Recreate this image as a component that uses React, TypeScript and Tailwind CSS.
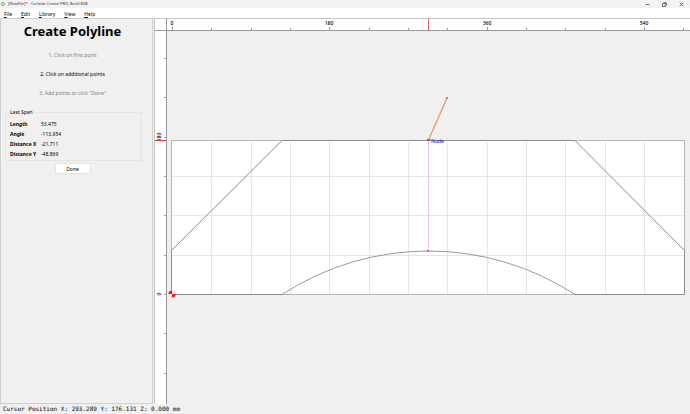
import type { ReactNode } from "react"

const menus = ["File", "Edit", "Library", "View", "Help"]

const steps = [
  { text: "1. Click on first point", active: false },
  { text: "2. Click on additional points", active: true },
  { text: '3. Add points or click "Done"', active: false },
]

const span = [
  { label: "Length", value: "53.475" },
  { label: "Angle", value: "-113.954" },
  { label: "Distance X", value: "-21.711" },
  { label: "Distance Y", value: "-48.869" },
]

// Canvas coordinates, measured from the corner below the rulers
const ORIGIN = { x: 5, y: 263 }
const STOCK = { width: 513, height: 154 }
const STEP = 39.33

const gridX = Array.from({ length: 12 }, (_, i) => Math.round(ORIGIN.x + (i + 1) * STEP))
const gridY = Array.from({ length: 3 }, (_, i) => Math.round(ORIGIN.y - (i + 1) * STEP))
const ticksX = Array.from({ length: 14 }, (_, i) => ({ pos: Math.round(ORIGIN.x + i * STEP), value: i * 45 }))
const ticksY = Array.from({ length: 9 }, (_, i) => ({ pos: Math.round(ORIGIN.y + (i - 6) * STEP), value: (6 - i) * 45 }))

function TitleBar() {
  return (
    <header className="flex h-2 shrink-0 items-center bg-[#f3f3f3] pl-px text-[4px] leading-[8px] text-[#333]">
      <svg viewBox="0 0 10 10" className="mr-[3px] h-1 w-1">
        <path d="M8.5 2.6A4 4 0 1 0 8.8 7V5.4H5.4" fill="none" stroke="#49a942" strokeWidth="2.4" />
      </svg>
      <h1>[NewFile]* - Carbide Create PRO, Build 838</h1>
      <div className="ml-auto flex gap-3 pr-[6px]">
        <WindowButton label="Minimize">
          <path d="M0.5 2.5h4" />
        </WindowButton>
        <WindowButton label="Restore">
          <path d="M0.5 1.7h2.8v2.8H0.5zM1.5 0.6h2.4q0.6 0 0.6 0.6v2.3" />
        </WindowButton>
        <WindowButton label="Close">
          <path d="M0.7 0.7l3.6 3.6M4.3 0.7l-3.6 3.6" />
        </WindowButton>
      </div>
    </header>
  )
}

function WindowButton({ label, children }: { label: string; children: ReactNode }) {
  return (
    <button type="button" aria-label={label} className="flex h-2 items-center">
      <svg viewBox="0 0 5 5" className="h-[5px] w-[5px]" fill="none" stroke="#333" strokeWidth="0.7">
        {children}
      </svg>
    </button>
  )
}

function MenuBar() {
  return (
    <nav className="flex h-[10px] shrink-0 gap-[9px] bg-white pl-1 text-[5px] leading-[12px]">
      {menus.map((menu) => (
        <button key={menu} type="button">
          <span className="underline">{menu[0]}</span>
          {menu.slice(1)}
        </button>
      ))}
    </nav>
  )
}

function SidePanel() {
  return (
    <aside className="flex w-[153px] shrink-0 flex-col border border-[#d0d0d0] bg-[#f0f0f0] px-1 text-[5px]">
      <h2 className="mt-[3px] pr-2 text-center text-[13px] leading-[18px] font-bold">Create Polyline</h2>
      <ol className="mt-[10px] flex flex-col gap-[9px] pr-2 text-center leading-[10px]">
        {steps.map((step) => (
          <li key={step.text} className={step.active ? "text-black" : "text-[#808080]"}>
            {step.text}
          </li>
        ))}
      </ol>
      <fieldset className="mt-[10px] mr-[6px] border border-[#e6e6e6] px-1 pt-[3px] pb-px">
        <legend className="leading-[8px]">Last Span</legend>
        <dl className="grid grid-cols-[31px_1fr] leading-[10px]">
          {span.map((row) => (
            <div key={row.label} className="contents">
              <dt className="font-bold whitespace-nowrap">{row.label}</dt>
              <dd>{row.value}</dd>
            </div>
          ))}
        </dl>
      </fieldset>
      <button type="button" className="mt-[2px] mr-2 h-[11px] w-9 self-center rounded-[1px] border border-[#e3e3e3] bg-white leading-[8px]">
        Done
      </button>
    </aside>
  )
}

function TopRuler() {
  return (
    <svg className="h-[13px] w-full border-t border-b border-t-[#c4c4c4] border-b-[#999] bg-white text-[5px]">
      {ticksX.map(({ pos, value }) => (
        <g key={value}>
          <path d={`M${pos}.5 ${value % 180 === 0 ? 8 : 9}v4`} stroke="#999" />
          {value % 180 === 0 && (
            <text x={pos} y="6" textAnchor="middle" className="font-medium">
              {value}
            </text>
          )}
        </g>
      ))}
      <path d="M261.5 0v12" stroke="#ff5050" />
    </svg>
  )
}

function LeftRuler() {
  return (
    <svg className="h-full w-[13px] border-r border-l border-r-[#999] border-l-[#c4c4c4] bg-white text-[5px]">
      {ticksY.map(({ pos, value }) => (
        <g key={value}>
          <path d={`M9 ${pos}.5h3`} stroke="#999" />
          {value % 180 === 0 && (
            <text transform={`translate(6 ${pos}) rotate(-90)`} textAnchor="middle" className="font-medium">
              {value}
            </text>
          )}
        </g>
      ))}
      <path d="M0 109.5h12" stroke="#ff3030" />
    </svg>
  )
}

function Canvas() {
  return (
    <svg className="h-full w-full bg-[#f0f0f0]">
      <rect x={ORIGIN.x} y={ORIGIN.y - STOCK.height} width={STOCK.width} height={STOCK.height} fill="#fff" />
      <g stroke="#e6e6e6">
        {gridX.map((x) => (
          <path key={x} d={`M${x}.5 111v152`} />
        ))}
        {gridY.map((y) => (
          <path key={y} d={`M5 ${y}.5h513`} />
        ))}
      </g>
      <rect x="4.5" y="109.5" width="513" height="154" fill="none" stroke="#b8b8b8" />
      <path
        d="M115 263.5H4.5V219.5L115 109.5H408L517.5 219.5V263.5H408"
        fill="none"
        stroke="#8c8c8c"
      />
      <path d="M115 263.5A268.5 268.5 0 0 1 408 263.5" fill="none" stroke="#8c8c8c" strokeWidth="0.9" />
      <path d="M261.5 110v110" stroke="#f9bdf9" />
      <rect x="260" y="219" width="2" height="2" fill="#c060c0" />
      <path d="M261.5 109L280 67" stroke="#e79a62" strokeWidth="1.3" />
      <rect x="260" y="108" width="3" height="2" fill="#a06070" />
      <rect x="279" y="66" width="2" height="2" fill="#c88058" />
      <text x="264" y="112" className="fill-[#2020e0] text-[5px] font-medium">
        Node
      </text>
      <g transform="translate(5 263)">
        <circle r="3.3" fill="#fff" stroke="#ff8080" strokeWidth="0.4" />
        <path d="M0 0V-3.5A3.5 3.5 0 0 0-3.5 0ZM0 0V3.5A3.5 3.5 0 0 0 3.5 0Z" fill="#ff1010" />
      </g>
    </svg>
  )
}

export default function App() {
  return (
    <div className="flex h-screen flex-col overflow-hidden bg-[#f0f0f0] font-['Noto_Sans',sans-serif] text-black">
      <TitleBar />
      <MenuBar />
      <main className="flex min-h-0 flex-1 gap-px">
        <SidePanel />
        <div className="grid min-w-0 flex-1 grid-cols-[13px_1fr] grid-rows-[13px_1fr]">
          <div className="border border-[#c4c4c4] border-r-[#999] border-b-[#999] bg-white" />
          <TopRuler />
          <LeftRuler />
          <Canvas />
        </div>
      </main>
      <footer className="h-[10px] shrink-0 pl-[3px] font-['DejaVu_Sans_Mono',monospace] text-[6px] leading-[10px] whitespace-pre">
        Cursor Position X: 293.289 Y: 176.131 Z: 0.000 mm
      </footer>
    </div>
  )
}
